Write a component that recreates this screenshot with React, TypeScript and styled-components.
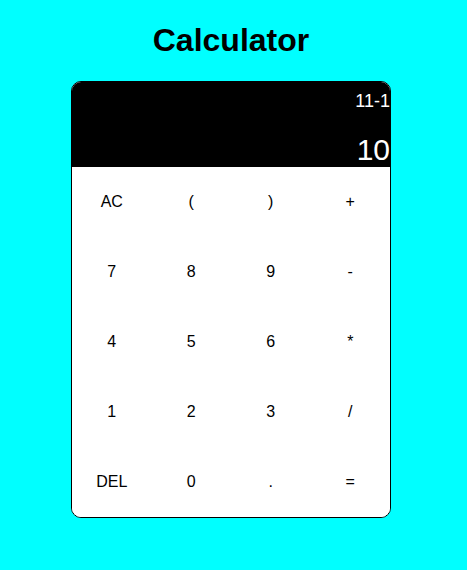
import { FunctionComponent } from "react";
import styled, { createGlobalStyle } from "styled-components";

const keys: string[][] = [
  ["AC", "(", ")", "+"],
  ["7", "8", "9", "-"],
  ["4", "5", "6", "*"],
  ["1", "2", "3", "/"],
  ["DEL", "0", ".", "="],
];

const App: FunctionComponent = () => {
  return (
    <Page>
      <GlobalStyle />
      <Title>Calculator</Title>
      <Card>
        <Display>
          <Expression>11-1</Expression>
          <Result>10</Result>
        </Display>
        <Keypad>
          {keys.flat().map((key) => (
            <Key key={key}>{key}</Key>
          ))}
        </Keypad>
      </Card>
    </Page>
  );
};

const GlobalStyle = createGlobalStyle`
  html, body {
    margin: 0;
    background: #00ffff;
    font-family: "Liberation Sans", Arial, sans-serif;
  }
`;

const Page = styled.div`
  display: flex;
  flex-direction: column;
  align-items: center;
  padding-right: 5px;
  min-height: 570px;
  box-sizing: border-box;
`;

const Title = styled.h1`
  font-size: 32px;
  font-weight: bold;
  margin: 22px 0;
  color: #000;
`;

const Card = styled.div`
  width: 320px;
  box-sizing: border-box;
  border: 1px solid #000;
  border-radius: 10px;
  overflow: hidden;
  background: #fff;
`;

const Display = styled.div`
  height: 85px;
  box-sizing: border-box;
  padding-top: 9px;
  background: #000;
  color: #fff;
  display: flex;
  flex-direction: column;
  align-items: flex-end;
  justify-content: space-between;
`;

const Expression = styled.div`
  font-size: 18px;
`;

const Result = styled.div`
  font-size: 30px;
`;

const Keypad = styled.div`
  display: grid;
  grid-template-columns: repeat(4, 1fr);
  grid-auto-rows: 70px;
`;

const Key = styled.button`
  border: none;
  background: #fff;
  color: #000;
  font-family: "Liberation Sans", Arial, sans-serif;
  font-size: 16px;
  padding: 0;
  cursor: pointer;
`;

export default App;
